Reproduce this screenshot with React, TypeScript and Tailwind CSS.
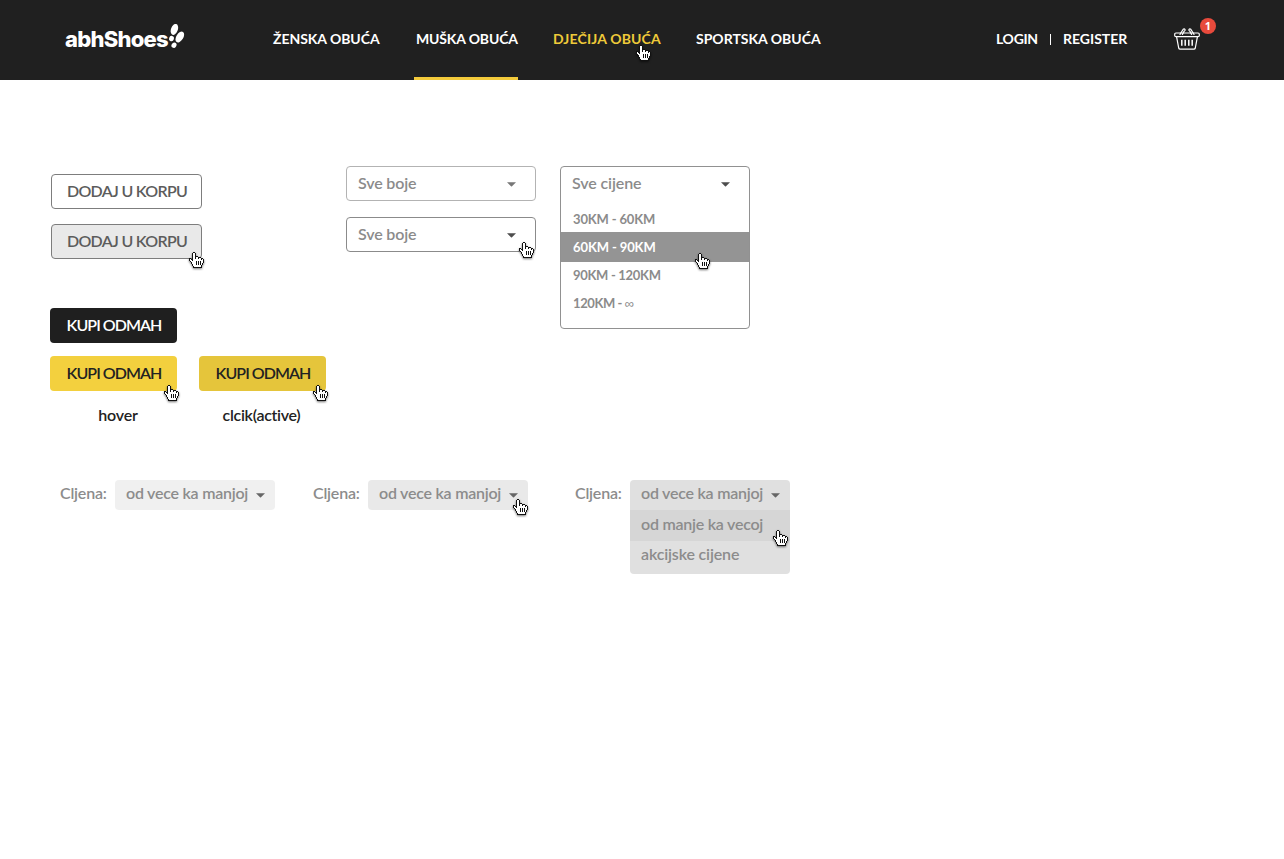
import type { ReactNode } from "react";

const HAND = [
  "....XX.........",
  "...XooX........",
  "...XooX........",
  "...XooX........",
  "...XooXXX......",
  "...XooXooXXX...",
  "XX.XooXooXooXX.",
  "XoXXooooooooXoX",
  "XooXooooooooooX",
  ".XoooooXoXoXooX",
  "..XooooXoXoXooX",
  "..XooooXoXoXoX.",
  "...XoooXoXoXoX.",
  "...XooooooooX..",
  "....XoooooooX..",
  "....XXXXXXXXX..",
];

function Cursor({ className }: { className: string }) {
  return (
    <svg
      className={`pointer-events-none absolute z-10 h-4 w-[15px] drop-shadow-[0_1px_1px_rgba(0,0,0,0.55)] ${className}`}
      viewBox="0 0 15 16"
      shapeRendering="crispEdges"
    >
      {HAND.flatMap((row, y) =>
        [...row].map((c, x) =>
          c === "." ? null : (
            <rect key={`${x}-${y}`} x={x} y={y} width="1" height="1" fill={c === "X" ? "#111" : "#fff"} />
          ),
        ),
      )}
    </svg>
  );
}

function Caret({ className }: { className: string }) {
  return (
    <svg className={`h-[5px] w-[9px] shrink-0 ${className}`} viewBox="0 0 9 5" fill="currentColor">
      <path d="M0 0.2h9L5 4.2q-.5.5-1 0z" />
    </svg>
  );
}

function Logo() {
  return (
    <div className="flex w-[208px] items-start">
      <span className="-mt-px w-[103px] font-['Inter',sans-serif] text-[22px] leading-[30px] font-extrabold tracking-[-0.75px] whitespace-nowrap">
        abhShoes
      </span>
      <svg className="-mt-px -ml-px h-[26px] w-[19px] shrink-0" viewBox="0 0 19 26" fill="#fff">
        <ellipse cx="7.4" cy="5.4" rx="3.4" ry="5.7" transform="rotate(20 7.4 5.4)" />
        <ellipse cx="4.5" cy="14.6" rx="2.4" ry="2.7" transform="rotate(15 4.5 14.6)" />
        <ellipse cx="12.8" cy="13" rx="3.5" ry="6" transform="rotate(32 12.8 13)" />
        <ellipse cx="7" cy="21.2" rx="2.4" ry="2.8" transform="rotate(32 7 21.2)" />
      </svg>
    </div>
  );
}

function Basket() {
  return (
    <svg className="h-[22px] w-[26px]" viewBox="0 0 26 22" fill="none" stroke="#fff" strokeWidth="1.2" strokeLinecap="round" strokeLinejoin="round">
      <rect x="0.7" y="5" width="24.6" height="3.6" rx="1.2" />
      <path d="M2.6 8.8 4.7 20c.2.8.6 1.2 1.4 1.2h13.8c.8 0 1.2-.4 1.4-1.2l2.1-11.2" />
      <path d="M6 6.4 9.2 1.2q1-.9 1.7.2t-.7 1.7L8.4 6.4M20 6.4 16.8 1.2q-1-.9-1.7.2t.7 1.7l1.8 3.3" />
      <path d="M7.8 11.8v6M11.2 11.8v6M14.8 11.8v6M18.2 11.8v6" strokeWidth="1.5" strokeLinecap="butt" />
    </svg>
  );
}

function Header() {
  return (
    <header className="flex h-20 bg-[#202020] pl-[65px] text-sm font-bold whitespace-nowrap text-white">
      <div className="pt-[25px]">
        <Logo />
      </div>
      <nav className="flex h-20 leading-[77px]">
        <a className="w-[141px] tracking-[-0.05px]">ŽENSKA OBUĆA</a>
        <a className="mr-[35px] w-[104px] border-b-[3px] border-[#f3ca3b] pl-[2px] tracking-[-0.15px]">MUŠKA OBUĆA</a>
        <a className="relative w-[143px] tracking-[0.15px] text-[#efca39]">
          DJEČIJA OBUĆA
          <Cursor className="top-[45px] left-[83px]" />
        </a>
        <a className="w-[300px]">SPORTSKA OBUĆA</a>
      </nav>
      <div className="flex leading-[77px]">
        <a className="w-[54px] tracking-[-0.3px]">LOGIN</a>
        <span className="mt-[34px] mr-3 h-[11px] w-px bg-white" />
        <a className="w-[111px]">REGISTER</a>
      </div>
      <div className="relative pt-7">
        <Basket />
        <span className="absolute top-[18px] left-[26px] flex size-4 items-center justify-center rounded-full bg-[#e84a3c] pb-px font-['Open_Sans',sans-serif] text-[11px] leading-none">
          1
        </span>
      </div>
    </header>
  );
}

function Button({ className, children, hand }: { className: string; children: ReactNode; hand?: string }) {
  return (
    <button className={`relative flex h-[35px] items-center justify-center rounded-[4px] pb-[2px] pl-px text-base whitespace-nowrap ${className}`}>
      {children}
      {hand && <Cursor className={hand} />}
    </button>
  );
}

function ColorSelect({ className, caret, hand }: { className: string; caret: string; hand?: boolean }) {
  return (
    <div className={`relative flex h-[35px] w-[190px] items-center justify-between rounded-[4px] border pr-[19px] pl-[11px] font-semibold tracking-[-0.15px] text-[#8b8b8b] ${className}`}>
      <span className="pb-[2px]">Sve boje</span>
      <Caret className={`mt-px ${caret}`} />
      {hand && <Cursor className="top-6 left-[172px]" />}
    </div>
  );
}

function SortField({ label, className, children }: { label: string; className: string; children: ReactNode }) {
  return (
    <div className={`flex font-semibold tracking-[-0.24px] text-[#8c8c8c] ${className}`}>
      <span className="w-[55px] leading-[26px] tracking-[-0.2px]">{label}</span>
      {children}
    </div>
  );
}

function SortValue() {
  return (
    <div className="flex h-[30px] items-center justify-between pr-[10px] pl-[11px]">
      <span className="pb-[4px]">od vece ka manjoj</span>
      <Caret className="mt-px text-[#666]" />
    </div>
  );
}

export default function App() {
  return (
    <div className="h-[859px] overflow-hidden bg-white font-['Lato',sans-serif] text-base whitespace-nowrap">
      <Header />
      <main className="pt-[86px]">
        <section className="flex h-[314px] pl-[50px]">
          <div className="w-[296px] pt-2">
            <Button className="ml-px w-[151px] border border-[#7d7d7d] font-semibold tracking-[-0.7px] text-[#5c5c5c]">DODAJ U KORPU</Button>
            <Button
              className="mt-[15px] ml-px w-[151px] border border-[#7d7d7d] bg-[#e9e9e9] font-semibold tracking-[-0.7px] text-[#5c5c5c]"
              hand="top-[27px] left-[137px]"
            >
              DODAJ U KORPU
            </Button>
            <Button className="mt-[49px] w-[127px] bg-[#1f1f1f] font-semibold tracking-[-0.95px] text-white">KUPI ODMAH</Button>
            <div className="mt-[13px] flex gap-[22px] font-semibold text-[#222]">
              <div>
                <Button className="w-[127px] bg-[#f3d03e] tracking-[-0.95px]" hand="top-[29px] left-[114px]">
                  KUPI ODMAH
                </Button>
                <p className="mt-3 pl-[9px] text-center tracking-[-0.2px]">hover</p>
              </div>
              <div>
                <Button className="w-[127px] bg-[#e5c53b] tracking-[-0.95px]" hand="top-[29px] left-[114px]">
                  KUPI ODMAH
                </Button>
                <p className="mt-3 pr-[2px] text-center tracking-[-0.3px]">clcik(active)</p>
              </div>
            </div>
          </div>
          <div className="flex w-[214px] flex-col gap-4">
            <ColorSelect className="border-[#b3b3b3]" caret="text-[#777]" />
            <ColorSelect className="border-[#8b8b8b]" caret="text-[#4d4d4d]" hand />
          </div>
          <div className="h-[163px] w-[190px] rounded-[4px] border border-[#919191] text-[#8b8b8b]">
            <div className="flex h-[34px] items-center justify-between pr-[19px] pl-[11px] font-semibold tracking-[-0.1px]">
              <span className="pb-[2px]">Sve cijene</span>
              <Caret className="text-[#4d4d4d]" />
            </div>
            <ul className="pt-1 text-[13px] font-bold tracking-[-0.15px]">
              <li className="h-[27px] pl-3 leading-[29px]">30KM - 60KM</li>
              <li className="relative h-[30px] bg-[#949494] pl-3 leading-[30px] tracking-[-0.1px] text-white">
                60KM - 90KM
                <Cursor className="top-[21px] left-[134px]" />
              </li>
              <li className="h-[27px] pl-3 leading-[27px] tracking-[-0.3px]">90KM - 120KM</li>
              <li className="h-7 pl-3 leading-[29px] tracking-[-0.4px]">
                120KM - <span className="font-['Noto_Sans',sans-serif] font-medium">∞</span>
              </li>
            </ul>
          </div>
        </section>
        <section className="flex pl-[60px]">
          <SortField label="Cljena:" className="w-[253px]">
            <div className="h-[30px] w-40 rounded-[4px] bg-[#f0f0f0]">
              <SortValue />
            </div>
          </SortField>
          <SortField label="Cljena:" className="w-[262px]">
            <div className="relative h-[30px] w-40 rounded-[4px] bg-[#e9e9e9]">
              <SortValue />
              <Cursor className="top-[19px] left-[145px]" />
            </div>
          </SortField>
          <SortField label="Cljena:" className="">
            <div className="h-[94px] w-40 rounded-[4px] bg-[#e0e0e0]">
              <SortValue />
              <div className="relative h-[31px] bg-[#d6d6d6] pl-[11px] leading-[28px]">
                od manje ka vecoj
                <Cursor className="top-5 left-[143px]" />
              </div>
              <div className="pl-[11px] leading-[26px] tracking-[-0.15px]">akcijske cijene</div>
            </div>
          </SortField>
        </section>
      </main>
    </div>
  );
}
